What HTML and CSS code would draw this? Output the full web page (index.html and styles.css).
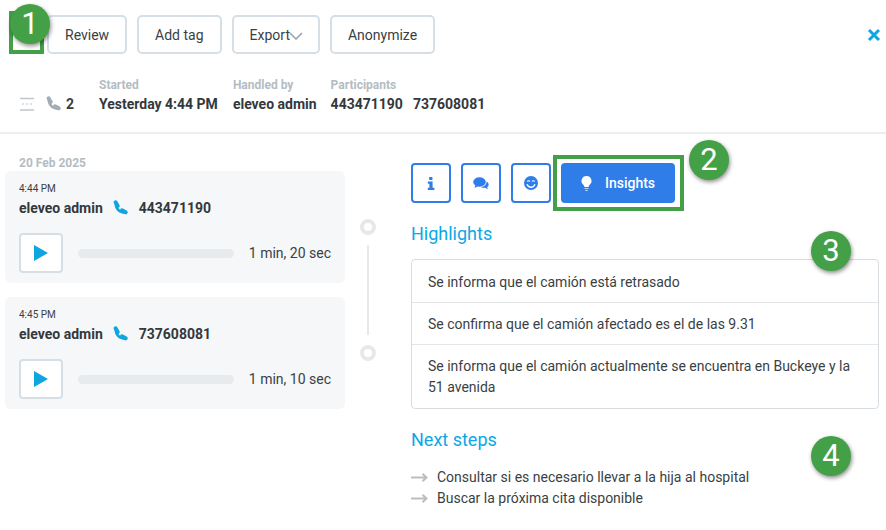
FILE: index.html
```html
<!DOCTYPE html>
<html lang="en">
<head>
  <meta charset="UTF-8">
  <title>Conversation insights</title>
  <link rel="stylesheet" href="styles.css">
</head>
<body>
  <div class="page">
    <div class="toolbar">
      <button class="btn">Review</button>
      <button class="btn">Add tag</button>
      <button class="btn btn-export">Export<svg class="chevron" width="14" height="8" viewBox="0 0 14 8"><path d="M1 1l6 6 6-6" fill="none" stroke="#9aa5ad" stroke-width="1.6"/></svg></button>
      <button class="btn">Anonymize</button>
      <svg class="close" width="14" height="14" viewBox="0 0 14 14"><path d="M2 2l10 10M12 2L2 12" stroke="#0ea5e0" stroke-width="3"/></svg>
    </div>

    <div class="meta">
      <div class="meta-count">
        <svg width="16" height="14" viewBox="0 0 16 14"><path d="M1 1.500h14M1 13h14" stroke="#c0c6cb" stroke-width="1.400"/><path d="M3 7h10" stroke="#c0c6cb" stroke-width="1.200" stroke-dasharray="2 2"/></svg>
        <svg class="phone-gray" width="16" height="16" viewBox="0 0 24 24"><g fill="none" stroke="#a3adb4" stroke-linecap="round"><path d="M6 4C5 13 11 19 20 19" stroke-width="4"/><path d="M5.500 3.500L8.500 9M15 15.500L20.500 18.500" stroke-width="6"/></g></svg>
        <b>2</b>
      </div>
      <div class="meta-item"><span>Started</span><b>Yesterday 4:44 PM</b></div>
      <div class="meta-item meta-handler"><span>Handled by</span><b>eleveo admin</b></div>
      <div class="meta-item"><span>Participants</span><div class="numbers"><b>443471190</b><b>737608081</b></div></div>
    </div>

    <div class="main">
      <div class="calls">
        <div class="date">20 Feb 2025</div>
        <div class="card">
          <div class="time">4:44 PM</div>
          <div class="who">eleveo admin
            <svg width="16" height="16" viewBox="0 0 24 24"><g fill="none" stroke="#0ea5e0" stroke-linecap="round"><path d="M6 4C5 13 11 19 20 19" stroke-width="4"/><path d="M5.500 3.500L8.500 9M15 15.500L20.500 18.500" stroke-width="6"/></g></svg>
            443471190</div>
          <div class="player">
            <div class="play"><svg width="14" height="16" viewBox="0 0 14 16"><path d="M0 0l14 8-14 8z" fill="#0ea5e0"/></svg></div>
            <div class="track"></div>
            <div class="length">1 min, 20 sec</div>
          </div>
        </div>
        <div class="card">
          <div class="time">4:45 PM</div>
          <div class="who">eleveo admin
            <svg width="16" height="16" viewBox="0 0 24 24"><g fill="none" stroke="#0ea5e0" stroke-linecap="round"><path d="M6 4C5 13 11 19 20 19" stroke-width="4"/><path d="M5.500 3.500L8.500 9M15 15.500L20.500 18.500" stroke-width="6"/></g></svg>
            737608081</div>
          <div class="player">
            <div class="play"><svg width="14" height="16" viewBox="0 0 14 16"><path d="M0 0l14 8-14 8z" fill="#0ea5e0"/></svg></div>
            <div class="track"></div>
            <div class="length">1 min, 10 sec</div>
          </div>
        </div>
      </div>

      <div class="timeline">
        <div class="dot"></div>
        <div class="line"></div>
        <div class="dot"></div>
      </div>

      <div class="details">
        <div class="tabs">
          <div class="tab">
            <svg width="8" height="13" viewBox="0 0 8 13"><path fill="#2f7de9" d="M2.200 0h3.200v3H2.200zM.8 4.600h4.800v6.200H7.400V13H.8v-2.200h1.600V6.800H.8z"/></svg>
          </div>
          <div class="tab">
            <svg width="16" height="13" viewBox="0 0 16 13"><ellipse cx="6.500" cy="5" rx="6.300" ry="4.700" fill="#2f7de9"/><path d="M2.500 8l-1 3 4-2z" fill="#2f7de9"/><path d="M13.600 4.500c1.500.8 2.200 2 2 3.400-.1 1-.7 1.700-1.500 2.300l.8 2.100-3-1.500c-1.500.2-3-.1-4-.9 3.300 0 5.900-2.400 5.700-5.400z" fill="#2f7de9"/></svg>
          </div>
          <div class="tab">
            <svg width="14" height="14" viewBox="0 0 14 14"><circle cx="7" cy="7" r="7" fill="#2f7de9"/><path d="M3 8.200c.8 2 2.300 3 4 3s3.200-1 4-3" fill="none" stroke="#fff" stroke-width="1.400"/><path d="M3.300 5.600c.6-1.100 2-1.100 2.600 0M8.100 5.600c.6-1.100 2-1.100 2.600 0" fill="none" stroke="#fff" stroke-width="1.100"/></svg>
          </div>
          <div class="tab tab-active">
            <svg width="11" height="15" viewBox="0 0 11 15"><path fill="#fff" d="M5.500 0a5 5 0 0 0-3 9c.5.500.7 1 .9 2h4.200c.2-1 .4-1.500.9-2a5 5 0 0 0-3-9z"/><path fill="#fff" opacity=".7" d="M3.500 12h4v1h-4zM4.300 14h2.400v1H4.300z"/></svg>
            Insights
          </div>
        </div>

        <h3>Highlights</h3>
        <div class="highlights">
          <div class="row">Se informa que el camión está retrasado</div>
          <div class="row">Se confirma que el camión afectado es el de las 9.31</div>
          <div class="row">Se informa que el camión actualmente se encuentra en Buckeye y la 51 avenida</div>
        </div>

        <h3 class="next-title">Next steps</h3>
        <ul class="steps">
          <li><svg width="17" height="9" viewBox="0 0 17 9"><path d="M0 4.500h15.500M11.500 .7l4 3.800-4 3.800" fill="none" stroke="#bdbdbd" stroke-width="2"/></svg>Consultar si es necesario llevar a la hija al hospital</li>
          <li><svg width="17" height="9" viewBox="0 0 17 9"><path d="M0 4.500h15.500M11.500 .7l4 3.800-4 3.800" fill="none" stroke="#bdbdbd" stroke-width="2"/></svg>Buscar la próxima cita disponible</li>
        </ul>
      </div>
    </div>
  </div>

  <!-- callouts on top of the screenshot -->
  <div class="mark-box mark-box-1"></div>
  <div class="mark-box mark-box-2"></div>
  <div class="badge badge-1">1</div>
  <div class="badge badge-2">2</div>
  <div class="badge badge-3">3</div>
  <div class="badge badge-4">4</div>
</body>
</html>
```

FILE: styles.css
```css
* {
  margin: 0;
  padding: 0;
  box-sizing: border-box;
}
html, body {
  width: 100%;
  height: 100%;
  overflow: hidden;
  background: #fff;
  font-family: 'Roboto', sans-serif;
  color: #3a3f44;
}
.page {
  width: 886px;
  height: 530px;
}
.toolbar {
  display: flex;
  align-items: center;
  gap: 10px;
  padding: 15px 5px 0 47px;
}
.btn {
  height: 39px;
  padding: 0 16px;
  border: 2px solid #d5dfe5;
  border-radius: 5px;
  background: #fff;
  color: #3a3f44;
  font-family: inherit;
  font-size: 14px;
  display: flex;
  align-items: center;
}
.btn-export {
  padding-right: 15px;
}
.chevron {
  margin: 3px 0 0 -1px;
}
.close {
  margin-left: auto;
}
.meta {
  display: flex;
  height: 80px;
  padding: 24px 0 0 19px;
  border-bottom: 2px solid #eceef0;
}
.meta-count {
  display: flex;
  align-items: center;
  gap: 10px;
  height: 17px;
  margin-top: 17px;
  width: 80px;
  font-size: 14px;
}
.meta-count svg.phone-gray {
  margin-right: -5px;
}
.meta-item {
  display: flex;
  flex-direction: column;
  gap: 4px;
  margin-right: 15px;
}
.meta-handler {
  margin-right: 14px;
}
.meta-item span {
  font-size: 12px;
  font-weight: 700;
  line-height: 14px;
  color: #b4bcc3;
}
.meta-item b {
  font-size: 14px;
  line-height: 17px;
  color: #33383c;
}
.numbers {
  display: flex;
  gap: 10px;
}
.main {
  display: flex;
  padding: 22px 7px 0 5px;
}
.calls {
  width: 340px;
}
.date {
  font-size: 12px;
  font-weight: 700;
  line-height: 14px;
  height: 15px;
  margin-left: 14px;
  color: #b4bcc3;
}
.card {
  height: 112px;
  margin-bottom: 14px;
  padding: 12px 14px;
  border-radius: 6px;
  background: #f6f7f9;
}
.time {
  font-size: 10px;
  line-height: 12px;
}
.who {
  display: flex;
  align-items: center;
  gap: 8px;
  margin-top: 4px;
  font-size: 14px;
  line-height: 18px;
  font-weight: 700;
  color: #33383c;
}
.who svg {
  margin: 0 3px 0 1px;
}
.player {
  display: flex;
  align-items: center;
  margin-top: 16px;
}
.play {
  display: flex;
  align-items: center;
  justify-content: center;
  width: 44px;
  height: 40px;
  border: 2px solid #d5dfe5;
  border-radius: 4px;
  background: #fff;
}
.track {
  width: 156px;
  height: 9px;
  margin-left: 15px;
  border-radius: 5px;
  background: #e8ebed;
}
.length {
  margin-left: 15px;
  font-size: 14px;
  white-space: nowrap;
}
.timeline {
  display: flex;
  flex-direction: column;
  align-items: center;
  width: 46px;
  padding-top: 63px;
}
.dot {
  width: 16px;
  height: 16px;
  border: 4px solid #e6e9eb;
  border-radius: 50%;
}
.line {
  width: 2px;
  height: 90px;
  margin: 10px 0;
  background: #e6e9eb;
}
.details {
  flex: 1;
  margin-left: 20px;
  padding-top: 7px;
}
.tabs {
  display: flex;
  gap: 10px;
}
.tab {
  display: flex;
  align-items: center;
  justify-content: center;
  width: 40px;
  height: 40px;
  border: 2px solid #2f7de9;
  border-radius: 4px;
}
.tab-active {
  width: 114px;
  gap: 13px;
  background: #2f7de9;
  color: #fff;
  font-size: 14px;
  font-weight: 500;
}
h3 {
  margin-top: 20px;
  font-size: 18px;
  font-weight: 400;
  line-height: 21px;
  color: #0aa8e6;
}
.highlights {
  margin-top: 15px;
  border: 1px solid #d8dde1;
  border-radius: 4px;
}
.row {
  font-size: 14px;
  line-height: 21px;
  border-bottom: 1px solid #e3e6e8;
}
.row:first-child {
  padding: 12px 16px 9px;
}
.row:nth-child(2) {
  padding: 11px 16px 9px;
}
.row:last-child {
  padding: 11px 16px 10px;
  border-bottom: none;
}
.next-title {
  margin-top: 20px;
}
.steps {
  list-style: none;
  margin-top: 17px;
}
.steps li {
  display: flex;
  align-items: center;
  gap: 9px;
  font-size: 14px;
  line-height: 21px;
}
.mark-box {
  position: absolute;
  border: 4px solid #43a047;
}
.mark-box-1 {
  left: 9px;
  top: 11px;
  width: 35px;
  height: 43px;
}
.mark-box-2 {
  left: 553px;
  top: 155px;
  width: 131px;
  height: 56px;
}
.badge {
  position: absolute;
  width: 40px;
  height: 40px;
  border-radius: 50%;
  background: #43a047;
  color: #fff;
  font-size: 31px;
  line-height: 40px;
  text-align: center;
  box-shadow: 1px 2px 4px rgba(0, 0, 0, 0.45);
}
.badge-1 {
  left: 10px;
  top: 4px;
}
.badge-2 {
  left: 689px;
  top: 140px;
}
.badge-3 {
  left: 811px;
  top: 231px;
}
.badge-4 {
  left: 811px;
  top: 436px;
}
```
